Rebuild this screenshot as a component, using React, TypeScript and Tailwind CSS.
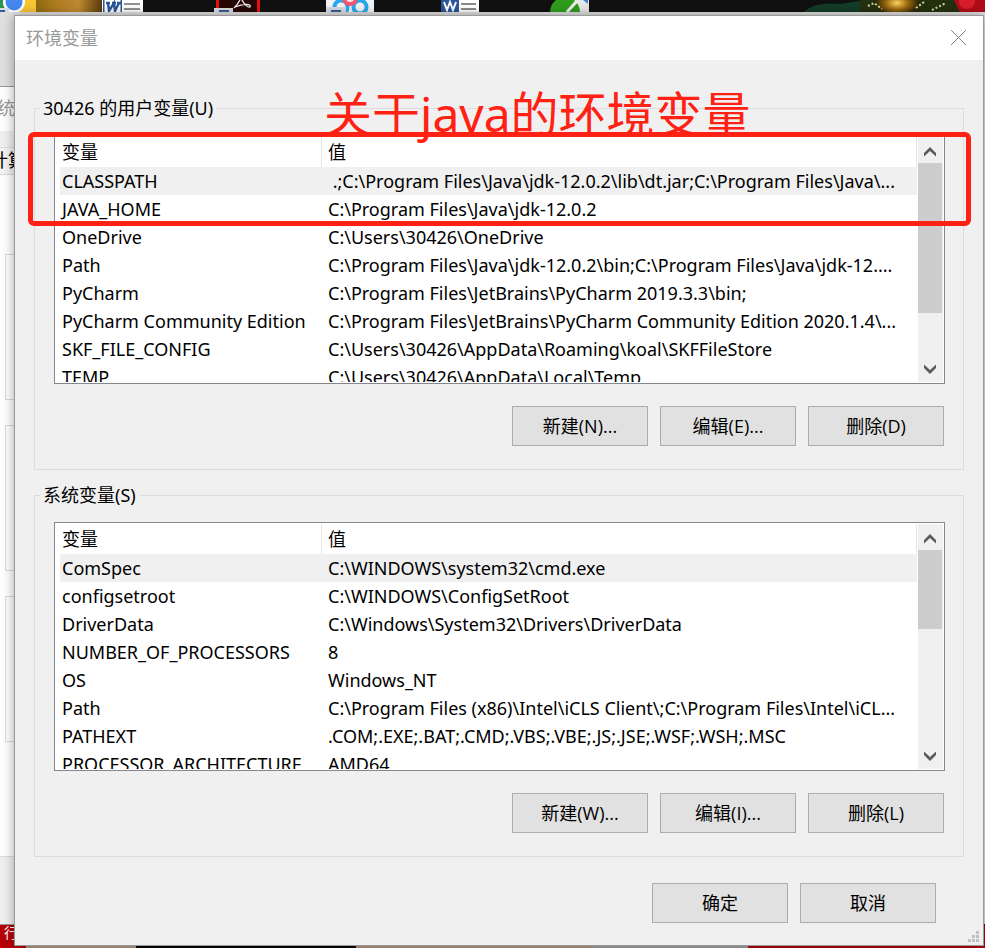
import type { ReactNode } from "react";

type Variable = { name: string; value: string };

const userVariables: Variable[] = [
  { name: "CLASSPATH", value: "\u00a0.;C:\\Program Files\\Java\\jdk-12.0.2\\lib\\dt.jar;C:\\Program Files\\Java\\..." },
  { name: "JAVA_HOME", value: "C:\\Program Files\\Java\\jdk-12.0.2" },
  { name: "OneDrive", value: "C:\\Users\\30426\\OneDrive" },
  { name: "Path", value: "C:\\Program Files\\Java\\jdk-12.0.2\\bin;C:\\Program Files\\Java\\jdk-12...." },
  { name: "PyCharm", value: "C:\\Program Files\\JetBrains\\PyCharm 2019.3.3\\bin;" },
  { name: "PyCharm Community Edition", value: "C:\\Program Files\\JetBrains\\PyCharm Community Edition 2020.1.4\\..." },
  { name: "SKF_FILE_CONFIG", value: "C:\\Users\\30426\\AppData\\Roaming\\koal\\SKFFileStore" },
  { name: "TEMP", value: "C:\\Users\\30426\\AppData\\Local\\Temp" },
];

const systemVariables: Variable[] = [
  { name: "ComSpec", value: "C:\\WINDOWS\\system32\\cmd.exe" },
  { name: "configsetroot", value: "C:\\WINDOWS\\ConfigSetRoot" },
  { name: "DriverData", value: "C:\\Windows\\System32\\Drivers\\DriverData" },
  { name: "NUMBER_OF_PROCESSORS", value: "8" },
  { name: "OS", value: "Windows_NT" },
  { name: "Path", value: "C:\\Program Files (x86)\\Intel\\iCLS Client\\;C:\\Program Files\\Intel\\iCL..." },
  { name: "PATHEXT", value: ".COM;.EXE;.BAT;.CMD;.VBS;.VBE;.JS;.JSE;.WSF;.WSH;.MSC" },
  { name: "PROCESSOR_ARCHITECTURE", value: "AMD64" },
];

function Chevron({ down = false }: { down?: boolean }) {
  return (
    <svg width="12" height="10" viewBox="0 0 12 10" className={down ? "rotate-180" : ""} aria-hidden="true">
      <path d="M0 6 6 0 12 6V9.600L6 4 0 9.600Z" fill="#5c5c5c" />
    </svg>
  );
}

function PushButton({ children }: { children: ReactNode }) {
  return (
    <button
      type="button"
      className="h-10 w-[136px] border border-[#adadad] bg-[#e1e1e1] text-center font-['Open_Sans','Noto_Sans_CJK_SC',sans-serif]"
    >
      {children}
    </button>
  );
}

function VariableList({ label, rows, thumb }: { label: string; rows: Variable[]; thumb: string }) {
  return (
    <div className="flex h-[249px] border border-[#828790] bg-white p-px">
      <div className="min-w-0 flex-1 overflow-hidden pl-1">
        <table aria-label={label} className="w-full table-fixed border-separate border-spacing-0 text-left">
          <thead>
            <tr className="h-[30px]">
              <th scope="col" className="w-[262px] border-r border-[#e5e5e5] p-0 pl-[2px] font-normal">
                变量
              </th>
              <th scope="col" className="border-r border-[#e5e5e5] p-0 pl-[6px] font-normal">
                值
              </th>
            </tr>
          </thead>
          <tbody>
            {rows.map((row, i) => (
              <tr key={row.name} className={i === 0 ? "h-7 bg-[#f0f0f0]" : "h-7"}>
                <td className="overflow-hidden p-0 pl-[2px] whitespace-nowrap">{row.name}</td>
                <td className="overflow-hidden p-0 pl-[6px] whitespace-nowrap">{row.value}</td>
              </tr>
            ))}
          </tbody>
        </table>
      </div>
      <div className="ml-px flex w-[25px] flex-col bg-[#f0f0f0] pr-px">
        <button type="button" aria-label="向上滚动" className="flex h-[26px] shrink-0 items-center justify-center pt-1">
          <Chevron />
        </button>
        <div className={`${thumb} bg-[#cdcdcd]`} />
        <button type="button" aria-label="向下滚动" className="mt-auto flex h-[26px] shrink-0 items-center justify-center">
          <Chevron down />
        </button>
      </div>
    </div>
  );
}

function VariableGroup(props: { title: string; rows: Variable[]; thumb: string; actions: string[] }) {
  return (
    <fieldset className="min-w-0 border border-[#dcdcdc] pr-[18px] pb-[23px] pl-[19px]">
      <legend className="-ml-[14px] h-6 px-[3px] leading-6">{props.title}</legend>
      <div className="pt-[15px]">
        <VariableList label={props.title} rows={props.rows} thumb={props.thumb} />
      </div>
      <div className="mt-[22px] flex justify-end gap-3 pr-px">
        {props.actions.map((text) => (
          <PushButton key={text}>{text}</PushButton>
        ))}
      </div>
    </fieldset>
  );
}

function TaskIcons() {
  return (
    <svg className="absolute top-0 left-0" width="985" height="12" viewBox="0 0 985 12" aria-hidden="true">
      <defs>
        <linearGradient id="gold">
          <stop offset="0" stopColor="#8a6a10" />
          <stop offset=".3" stopColor="#b07c20" />
          <stop offset=".65" stopColor="#c08c32" />
          <stop offset="1" stopColor="#5a3b0c" />
        </linearGradient>
        <radialGradient id="star">
          <stop offset="0" stopColor="#ffd460" />
          <stop offset=".5" stopColor="#9b6a10" />
          <stop offset="1" stopColor="#2a2408" />
        </radialGradient>
      </defs>
      <path d="M0 0H985V12H0Z" fill="#111" />
      <path d="M35 0H102V12H35Z" fill="url(#gold)" />
      <path d="M0 0H36V12H0Z" fill="#f9c633" />
      <path d="M0 0H4L9 12H0Z" fill="#2e9550" />
      <circle cx="14" cy="2" r="11" fill="#fff" />
      <circle cx="14" cy="2" r="8.500" fill="#4488f0" />
      <path d="M0 8H9V12H0Z" fill="#d9dde2" />
      <path d="M0 10H5V12H0Z" fill="#345f99" />
      <path d="M102 0H143V12H102Z" fill="#fff" />
      <path d="M103 0H122V12H103Z" fill="#2b579a" />
      <path d="M104.500 0H120.500V12H104.500Z" fill="#fff" />
      <path d="M106 3H110M112 3H116M117 3H121M108 3 109 11 114 3 115 11 119 3" fill="none" stroke="#2b579a" strokeWidth="2.400" />
      <path d="M124 4H140M124 9H140" stroke="#929292" strokeWidth="2" />
      <path d="M216 0H260V12H216Z" fill="#e5140c" />
      <path d="M219 0H257V12H219Z" fill="#260605" />
      <path d="M240 0C238 4 236 6 234 8M242 0C244 4 248 8 250 7 252 4 244 3 235 7" fill="none" stroke="#eee" strokeWidth="1.300" />
      <path d="M214 8H233V12H214Z" fill="#d9dde2" />
      <path d="M219 10H229V12H219Z" fill="#345f99" />
      <path d="M326 0H374V12H326Z" fill="#f2f4f7" />
      <circle cx="341" cy="7" r="6.500" fill="none" stroke="#29a9ed" strokeWidth="4" />
      <circle cx="360" cy="7" r="6.500" fill="none" stroke="#29a9ed" strokeWidth="4" />
      <circle cx="350" cy="-2" r="6" fill="none" stroke="#fa5570" strokeWidth="4" />
      <path d="M326 7H346V12H326Z" fill="#d9dde2" />
      <path d="M331 10H341V12H331Z" fill="#345f99" />
      <path d="M441 0H479V12H441Z" fill="#fff" />
      <path d="M441 0H459V12H441Z" fill="#2b579a" />
      <path d="M444 2 447 10 450 2 453 10 456 2" fill="none" stroke="#fff" strokeWidth="2" />
      <path d="M461 4H476M461 9H476" stroke="#8a8a8a" strokeWidth="2" />
      <path d="M560 0H589V12H560Z" fill="#e8e8e8" />
      <circle cx="565" cy="12" r="15" fill="#2f9d1d" />
      <path d="M567 12 577 1" stroke="#eee" strokeWidth="3" />
      <path d="M583 0H588V4Z" fill="#3b87e0" />
      <path d="M804 12C810 5 825 2 840 4L866 0V12Z" fill="#123d27" />
      <path d="M860 0H960V12H860Z" fill="#24300f" />
      <ellipse cx="897" cy="3" rx="22" ry="13" fill="url(#star)" />
      <path d="M868 6 874 3 882 9M916 8 924 2M932 10 946 3" stroke="#d4dba1" strokeWidth="2" strokeDasharray="2 2" fill="none" />
      <path d="M954 0H985V12H960Z" fill="#b10d19" />
      <ellipse cx="967" cy="2" rx="8" ry="7" fill="#d81e2b" />
    </svg>
  );
}

function PropertiesWindow() {
  return (
    <div className="absolute top-[86px] left-0 flex h-[839px] w-8 flex-col overflow-hidden border-t border-b border-[#999] bg-white">
      <div className="h-11 shrink-0 pt-[9px] leading-6 text-[#999]">
        <span className="-ml-[3px]">统</span>
      </div>
      <div className="h-4 shrink-0 bg-[#f0f0f0]" />
      <div className="h-7 shrink-0 border-t border-b border-[#dcdcdc] bg-[#f4f4f4] leading-6 whitespace-nowrap">
        <span className="-ml-[10px]">计算</span>
      </div>
      <div className="flex flex-1 flex-col gap-[25px] border-b border-[#dcdcdc] pt-[79px] pl-[5px]">
        <div className="h-[146px] border border-[#dcdcdc]" />
        <div className="h-[146px] border border-[#dcdcdc]" />
        <div className="h-[146px] border border-[#dcdcdc]" />
      </div>
      <div className="h-[67px] shrink-0 bg-[#f0f0f0]" />
    </div>
  );
}

export default function App() {
  return (
    <div className="relative flex min-h-screen flex-col overflow-hidden bg-[#111] pt-[15px] pr-px pb-[2px] pl-[14px] font-['Noto_Sans','Noto_Sans_CJK_SC',sans-serif] text-[18px] leading-6 text-black">
      <div className="absolute inset-x-0 top-0 h-3 bg-[#111]">
        <TaskIcons />
      </div>
      <div className="absolute inset-x-0 top-3 bottom-6 bg-[#e1e1e1]" />
      <PropertiesWindow />
      <div className="absolute inset-x-0 bottom-0 flex h-[23px] bg-[#b80008] text-[14px] leading-4 text-white">
        <span className="w-[26px] shrink-0 pl-1">行</span>
        <span className="w-[110px] bg-[#b29a88]" />
        <span className="w-[220px] bg-[#090606]" />
        <span className="w-[237px] bg-[#b69580]" />
        <span className="w-[155px] bg-[#a8a3a5]" />
      </div>

      <main className="relative flex flex-1 flex-col border border-[#999] bg-[#f0f0f0] shadow-[0_0_12px_rgba(0,0,0,0.35)]">
        <header className="flex h-11 shrink-0 items-center justify-between bg-white pr-4 pb-px pl-[11px]">
          <h1 className="text-[#999]">环境变量</h1>
          <button type="button" aria-label="关闭">
            <svg width="17" height="17" viewBox="0 0 17 17" aria-hidden="true">
              <path d="M1 1 16 16M16 1 1 16" stroke="#858585" strokeWidth="1" />
            </svg>
          </button>
        </header>

        <div className="flex flex-1 flex-col gap-[13px] px-[19px] pt-9">
          <VariableGroup
            title="30426 的用户变量(U)"
            rows={userVariables}
            thumb="h-[150px]"
            actions={["新建(N)...", "编辑(E)...", "删除(D)"]}
          />
          <VariableGroup
            title="系统变量(S)"
            rows={systemVariables}
            thumb="h-[79px]"
            actions={["新建(W)...", "编辑(I)...", "删除(L)"]}
          />
          <div className="flex justify-end gap-3 pt-[13px] pr-7">
            <PushButton>确定</PushButton>
            <PushButton>取消</PushButton>
          </div>
        </div>

        <svg className="absolute right-[3px] bottom-[2px]" width="12" height="12" viewBox="0 0 12 12" aria-hidden="true">
          <path d="M8 0h3v3H8zM4 4h3v3H4zM8 4h3v3H8zM0 8h3v3H0zM4 8h3v3H4zM8 8h3v3H8z" fill="#bfbfbf" />
        </svg>
      </main>

      <div className="pointer-events-none absolute top-[132px] right-[14px] left-7 h-[94px] rounded-md border-[5px] border-[#ff2113]" />
      <p className="pointer-events-none absolute top-[84px] left-[324px] text-[48px] leading-[60px] whitespace-nowrap text-[#ff2113]">
        关于java的环境变量
      </p>
    </div>
  );
}
